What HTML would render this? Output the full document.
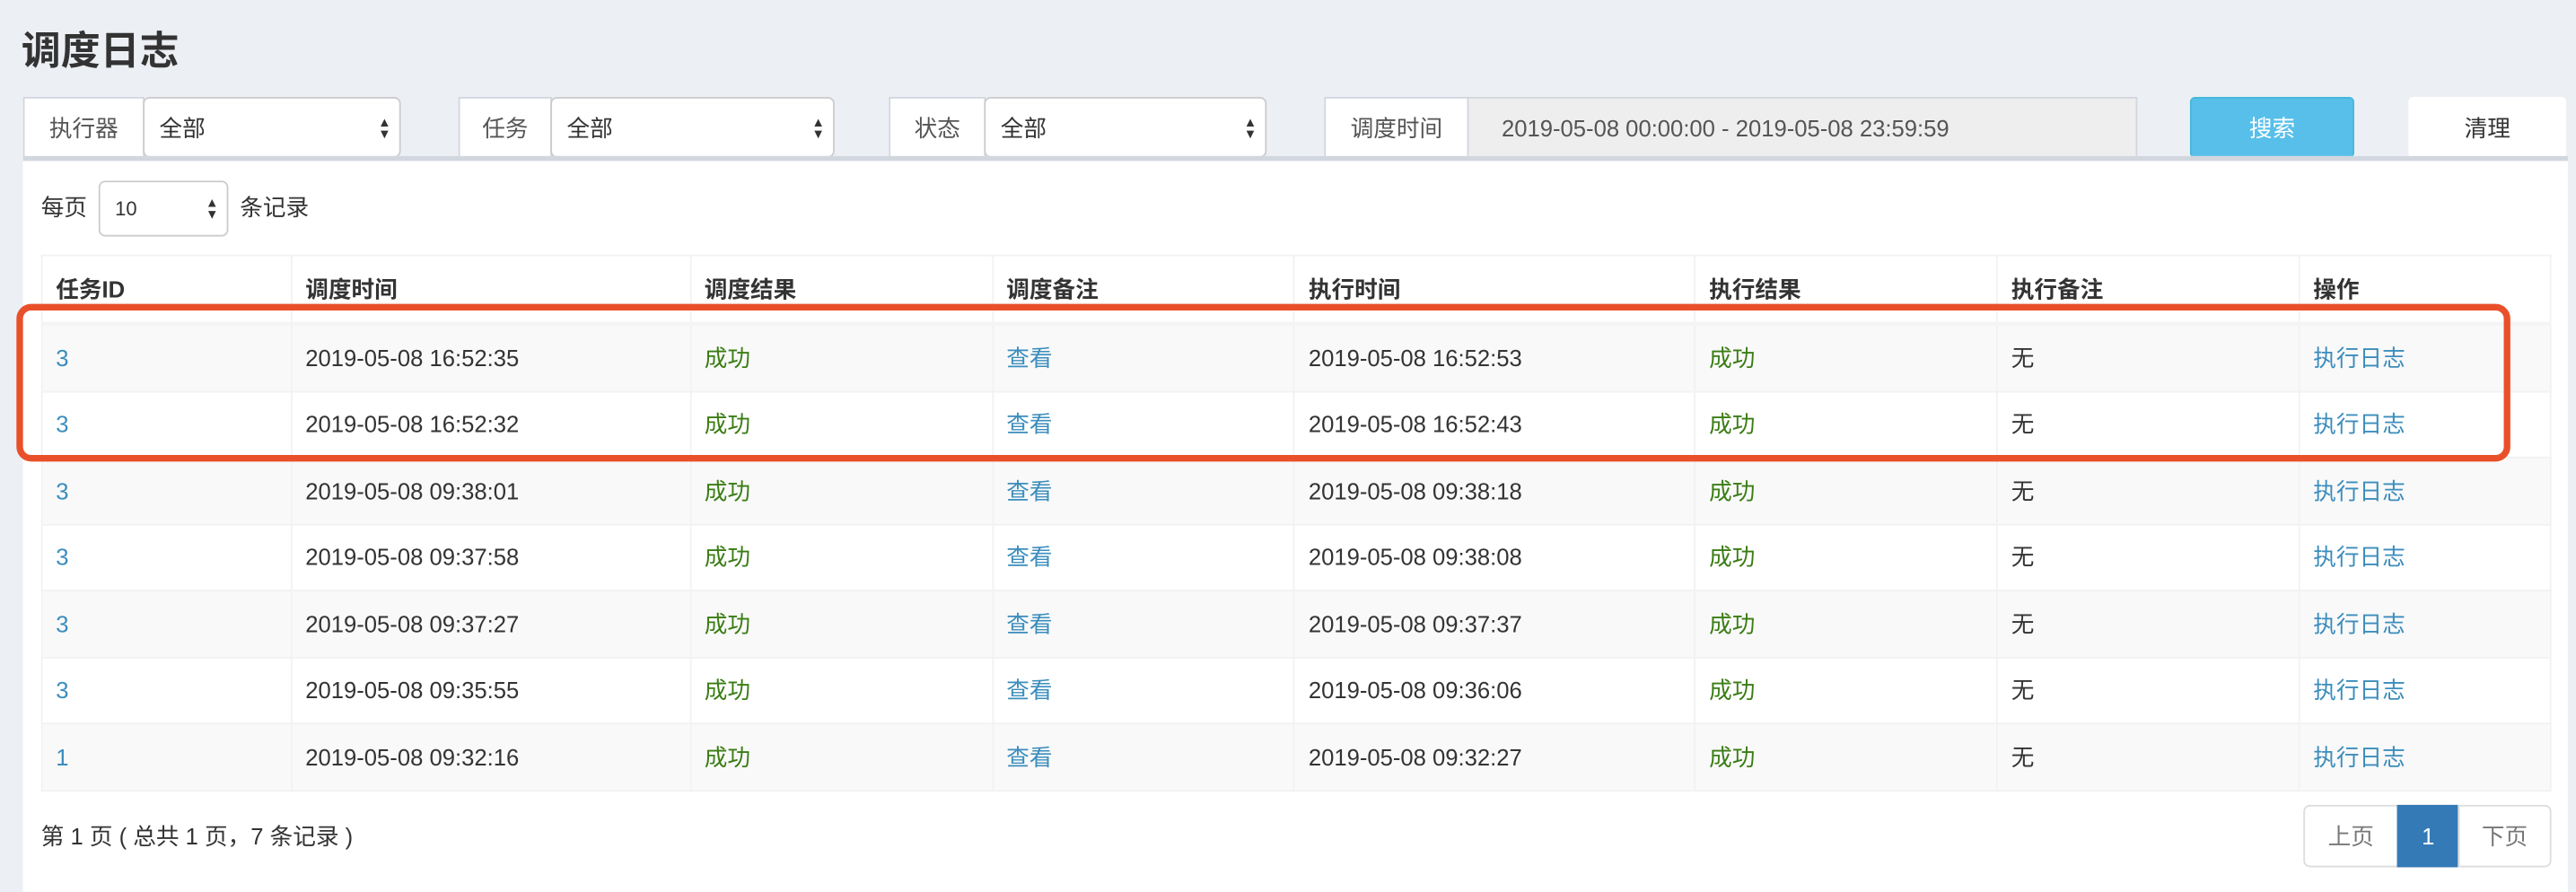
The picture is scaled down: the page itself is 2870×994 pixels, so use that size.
<!DOCTYPE html>
<html><head><meta charset="utf-8"><style>
html,body{margin:0;padding:0;width:2870px;height:994px;overflow:hidden;background:#ecf0f5;}
#w{position:absolute;left:0;top:0;width:1568px;height:543px;transform:scale(1.8304);transform-origin:0 0;font-family:"Liberation Sans","Noto Sans CJK SC",sans-serif;font-size:14px;color:#333;}
.a{position:absolute;box-sizing:border-box;}
.addon{background:#fff;border:1px solid #d2d6de;color:#555;display:flex;align-items:center;justify-content:center;}
.sel{background:#fff;border:1px solid #ccc;border-radius:4px;color:#333;display:flex;align-items:center;padding-left:9px;}
.arr{position:absolute;right:5px;top:50%;transform:translateY(-50%);font-size:8px;line-height:7px;color:#333;text-align:center}
table{border-collapse:collapse;}
td,th{border:1px solid #f2f2f2;text-align:left;padding:0 8px;height:39.5px;font-size:14px;box-sizing:content-box}
th{font-weight:bold;height:40px;border-bottom:2px solid #f4f4f4}
tr.g td{background:#f9f9f9}
.l{color:#3c8dbc}.s{color:#3a7d14}
</style></head><body><div id="w">
<div class="a" style="left:13px;top:11px;font-size:24px;font-weight:bold;color:#333">调度日志</div>

<div class="a addon" style="left:14px;top:59px;width:74px;height:37px">执行器</div>
<div class="a sel" style="left:87px;top:59px;width:157px;height:37px">全部<span class="arr">▲<br>▼</span></div>
<div class="a addon" style="left:279px;top:59px;width:57px;height:37px">任务</div>
<div class="a sel" style="left:335px;top:59px;width:173px;height:37px">全部<span class="arr">▲<br>▼</span></div>
<div class="a addon" style="left:541px;top:59px;width:59px;height:37px">状态</div>
<div class="a sel" style="left:599px;top:59px;width:172px;height:37px">全部<span class="arr">▲<br>▼</span></div>
<div class="a addon" style="left:806px;top:59px;width:88px;height:37px">调度时间</div>
<div class="a" style="left:893px;top:59px;width:408px;height:37px;background:#eee;border:1px solid #d2d6de;display:flex;align-items:center;padding-left:20px;color:#555">2019-05-08 00:00:00 - 2019-05-08 23:59:59</div>
<div class="a" style="left:1333px;top:59px;width:100px;height:37px;background:#58bfea;border:1px solid #46b8da;border-radius:3px;color:#fff;display:flex;align-items:center;justify-content:center">搜索</div>
<div class="a" style="left:1466px;top:59px;width:96px;height:37px;background:#fff;border-radius:3px;display:flex;align-items:center;justify-content:center">清理</div>

<div class="a" style="left:14px;top:95px;width:1549px;height:448px;background:#fff;border-top:3px solid #d2d6de"></div>
<div class="a" style="left:25px;top:116px">每页</div>
<div class="a sel" style="left:60px;top:110px;width:79px;height:34px;font-size:12px">10<span class="arr">▲<br>▼</span></div>
<div class="a" style="left:146px;top:116px">条记录</div>

<table class="a" style="left:25px;top:155px;width:1528px">
<colgroup><col style="width:152px"><col style="width:243px"><col style="width:184px"><col style="width:184px"><col style="width:244px"><col style="width:184px"><col style="width:184px"><col style="width:153px"></colgroup>
<tr><th>任务ID</th><th>调度时间</th><th>调度结果</th><th>调度备注</th><th>执行时间</th><th>执行结果</th><th>执行备注</th><th>操作</th></tr>
<tr class="g"><td class="l">3</td><td>2019-05-08 16:52:35</td><td class="s">成功</td><td class="l">查看</td><td>2019-05-08 16:52:53</td><td class="s">成功</td><td>无</td><td class="l">执行日志</td></tr>
<tr><td class="l">3</td><td>2019-05-08 16:52:32</td><td class="s">成功</td><td class="l">查看</td><td>2019-05-08 16:52:43</td><td class="s">成功</td><td>无</td><td class="l">执行日志</td></tr>
<tr class="g"><td class="l">3</td><td>2019-05-08 09:38:01</td><td class="s">成功</td><td class="l">查看</td><td>2019-05-08 09:38:18</td><td class="s">成功</td><td>无</td><td class="l">执行日志</td></tr>
<tr><td class="l">3</td><td>2019-05-08 09:37:58</td><td class="s">成功</td><td class="l">查看</td><td>2019-05-08 09:38:08</td><td class="s">成功</td><td>无</td><td class="l">执行日志</td></tr>
<tr class="g"><td class="l">3</td><td>2019-05-08 09:37:27</td><td class="s">成功</td><td class="l">查看</td><td>2019-05-08 09:37:37</td><td class="s">成功</td><td>无</td><td class="l">执行日志</td></tr>
<tr><td class="l">3</td><td>2019-05-08 09:35:55</td><td class="s">成功</td><td class="l">查看</td><td>2019-05-08 09:36:06</td><td class="s">成功</td><td>无</td><td class="l">执行日志</td></tr>
<tr class="g"><td class="l">1</td><td>2019-05-08 09:32:16</td><td class="s">成功</td><td class="l">查看</td><td>2019-05-08 09:32:27</td><td class="s">成功</td><td>无</td><td class="l">执行日志</td></tr>
</table>

<div class="a" style="left:10px;top:185px;width:1518px;height:96px;border:4px solid #e9502a;border-radius:9px"></div>

<div class="a" style="left:25px;top:499px">第 1 页 ( 总共 1 页，7 条记录 )</div>
<div class="a" style="left:1402px;top:490px;width:58px;height:38px;border:1px solid #ddd;border-radius:4px 0 0 4px;color:#777;display:flex;align-items:center;justify-content:center">上页</div>
<div class="a" style="left:1459px;top:490px;width:38px;height:38px;background:#337ab7;color:#fff;display:flex;align-items:center;justify-content:center">1</div>
<div class="a" style="left:1496px;top:490px;width:57px;height:38px;border:1px solid #ddd;border-radius:0 4px 4px 0;color:#777;display:flex;align-items:center;justify-content:center">下页</div>
</div></body></html>
